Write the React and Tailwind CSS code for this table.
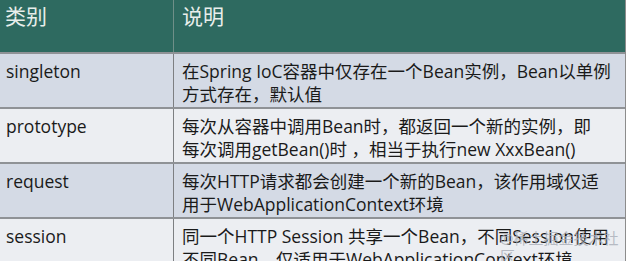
import React from 'react'

const rows = [
  { name: 'singleton', desc: ['在Spring IoC容器中仅存在一个Bean实例，Bean以单例', '方式存在，默认值'], bg: 'bg-[#d4dae5]' },
  { name: 'prototype', desc: ['每次从容器中调用Bean时，都返回一个新的实例，即', '每次调用getBean()时 ，相当于执行new XxxBean()'], bg: 'bg-[#eceef2]' },
  { name: 'request', desc: ['每次HTTP请求都会创建一个新的Bean，该作用域仅适', '用于WebApplicationContext环境'], bg: 'bg-[#d4dae5]' },
  { name: 'session', desc: ['同一个HTTP Session 共享一个Bean，不同Session使用', '不同Bean，仅适用于WebApplicationContext环境'], bg: 'bg-[#eceef2]' },
]

export default function App() {
  return (
    <div className="relative w-[627px] h-[261px] overflow-hidden bg-white text-[#1a1a1a]" style={{ fontFamily: '"Open Sans", "Noto Sans CJK SC", sans-serif' }}>
      <div className="w-[626px] border-r border-[#8c8c8c]">
        {/* header */}
        <div className="grid grid-cols-[174px_1fr] h-[52px] bg-[#2e6a60] text-[#e8eeeb] text-[21px] leading-[26px]">
          <div className="pl-[5px] pt-[3px] border-r border-[#6f8f88]">类别</div>
          <div className="pl-[8px] pt-[3px]">说明</div>
        </div>
        {rows.map((r) => (
          <div key={r.name} className={`grid grid-cols-[174px_1fr] h-[55px] border-t-2 border-[#8f9296] ${r.bg}`}>
            <div className="pl-[6px] pt-[6px] text-[17.5px] leading-[23px] border-r border-[#7d7f82]">{r.name}</div>
            <div className="pl-[8px] pt-[6px] text-[17.5px] leading-[23px] whitespace-nowrap">
              {r.desc.map((l) => <div key={l}>{l}</div>)}
            </div>
          </div>
        ))}
      </div>
      {/* watermark */}
      <div className="absolute left-[500px] top-[229px] text-[15px] text-[#a9aeb8] leading-[18px] opacity-80">@稀土掘金技术社区</div>
    </div>
  )
}
